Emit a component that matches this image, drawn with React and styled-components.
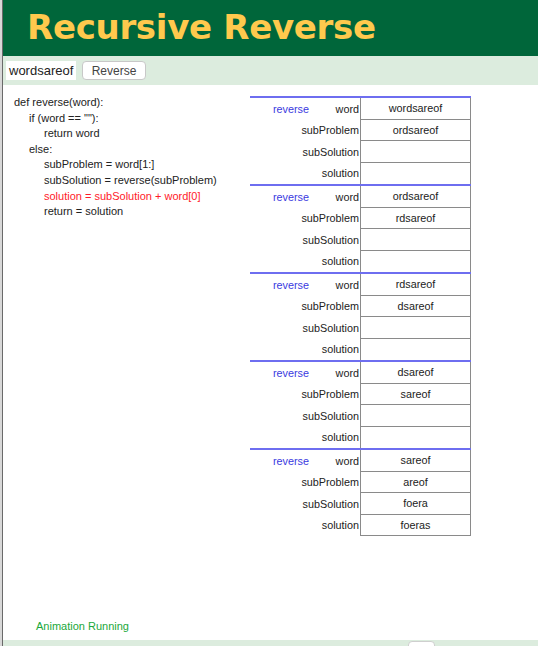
import React from "react";
import styled, { createGlobalStyle } from "styled-components";

const Global = createGlobalStyle`
  html, body { margin: 0; padding: 0; background: #fff; }
  body { font-family: "Liberation Sans", Arial, sans-serif; }
  #root { height: 646px; }
`;

const Page = styled.div`
  display: flex;
  height: 646px;
  overflow: hidden;
`;

const EdgeStrip = styled.div`
  width: 2px;
  background: #d8d8d8;
  border-right: 1px solid #6a6a6a;
  flex: none;
`;

const Main = styled.div`
  flex: 1;
  display: flex;
  flex-direction: column;
  min-width: 0;
`;

const Header = styled.header`
  height: 56px;
  background: #00663a;
  display: flex;
  align-items: center;
  padding-left: 24px;
`;

const Title = styled.h1`
  margin: 0;
  font-family: "DejaVu Sans", Verdana, sans-serif;
  font-weight: bold;
  font-size: 34px;
  color: #ffc94d;
  letter-spacing: -0.3px;
  line-height: 1;
  margin-top: -3px;
`;

const Toolbar = styled.div`
  height: 29px;
  background: #dcecde;
  display: flex;
  align-items: center;
  gap: 6px;
  padding-left: 3px;
`;

const WordInput = styled.div`
  width: 70px;
  height: 19px;
  background: #fff;
  font-size: 13px;
  color: #222;
  display: flex;
  align-items: center;
  padding-left: 3px;
  box-sizing: border-box;
`;

const Button = styled.div`
  height: 19px;
  width: 64px;
  box-sizing: border-box;
  background: #fff;
  border: 1px solid #c8c8c8;
  border-radius: 4px;
  font-size: 12px;
  color: #444;
  display: flex;
  align-items: center;
  justify-content: center;
`;

const Content = styled.div`
  flex: 1;
  display: flex;
  align-items: flex-start;
`;

const Code = styled.div`
  width: 236px;
  padding: 10px 0 0 11px;
  box-sizing: border-box;
  font-size: 11px;
  line-height: 15.6px;
  color: #222;
`;

const CodeLine = styled.div`
  padding-left: ${(p) => p.indent * 15}px;
  color: ${(p) => (p.active ? "#ff1a2a" : "#222")};
  white-space: pre;
`;

const Table = styled.div`
  margin-top: 11px;
  width: 221px;
  margin-left: 11px;
`;

const Frame = styled.div`
  border-top: 2px solid #6e6ef0;
`;

const Row = styled.div`
  display: grid;
  grid-template-columns: 110px 111px;
  height: 21.5px;
  font-size: 10.8px;
`;

const LabelCell = styled.div`
  display: flex;
  align-items: center;
  padding-left: 23px;
  padding-right: 1px;
  color: #222;
`;

const FuncName = styled.span`
  color: #3a3ae0;
`;

const VarName = styled.span`
  margin-left: auto;
`;

const ValueCell = styled.div`
  border-left: 1px solid #8a8a8a;
  border-right: 1px solid #8a8a8a;
  border-bottom: ${(p) => (p.last ? "1px solid #8a8a8a" : p.end ? "none" : "1px solid #8a8a8a")};
  display: flex;
  align-items: center;
  justify-content: center;
  color: #222;
`;

const Status = styled.div`
  height: 29px;
  padding-left: 33px;
  font-size: 11px;
  color: #1aa83a;
  display: flex;
  align-items: center;
`;

const BottomBar = styled.div`
  height: 6px;
  background: #dcecde;
  position: relative;
`;

const BottomNub = styled.div`
  position: absolute;
  left: 405px;
  top: 1px;
  width: 25px;
  height: 8px;
  background: #fff;
  border: 1px solid #cfcfcf;
  border-radius: 4px;
`;

const code = [
  { t: "def reverse(word):", i: 0 },
  { t: 'if (word == ""):', i: 1 },
  { t: "return word", i: 2 },
  { t: "else:", i: 1 },
  { t: "subProblem = word[1:]", i: 2 },
  { t: "subSolution = reverse(subProblem)", i: 2 },
  { t: "solution = subSolution + word[0]", i: 2, a: true },
  { t: "return = solution", i: 2 },
];

const frames = [
  ["wordsareof", "ordsareof", "", ""],
  ["ordsareof", "rdsareof", "", ""],
  ["rdsareof", "dsareof", "", ""],
  ["dsareof", "sareof", "", ""],
  ["sareof", "areof", "foera", "foeras"],
];

const vars = ["word", "subProblem", "subSolution", "solution"];

export default function App() {
  return (
    <>
      <Global />
      <Page>
        <EdgeStrip />
        <Main>
          <Header>
            <Title>Recursive Reverse</Title>
          </Header>
          <Toolbar>
            <WordInput>wordsareof</WordInput>
            <Button>Reverse</Button>
          </Toolbar>
          <Content>
            <Code>
              {code.map((l, k) => (
                <CodeLine key={k} indent={l.i} active={l.a}>
                  {l.t}
                </CodeLine>
              ))}
            </Code>
            <Table>
              {frames.map((f, fi) => (
                <Frame key={fi}>
                  {vars.map((v, vi) => (
                    <Row key={v}>
                      <LabelCell>
                        {vi === 0 && <FuncName>reverse</FuncName>}
                        <VarName>{v}</VarName>
                      </LabelCell>
                      <ValueCell
                        end={vi === 3}
                        last={vi === 3 && fi === frames.length - 1}
                      >
                        {f[vi]}
                      </ValueCell>
                    </Row>
                  ))}
                </Frame>
              ))}
            </Table>
          </Content>
          <Status>Animation Running</Status>
          <BottomBar>
            <BottomNub />
          </BottomBar>
        </Main>
      </Page>
    </>
  );
}
